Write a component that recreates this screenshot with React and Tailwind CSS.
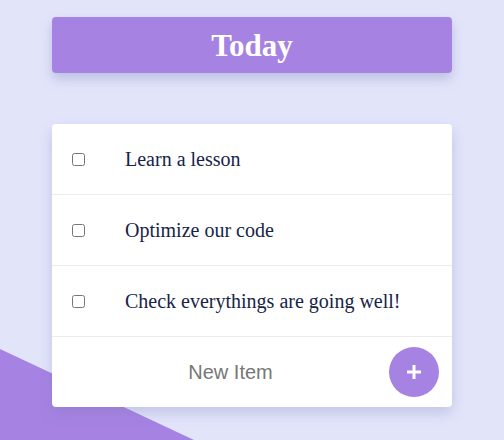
import React from "react";

const items = ["Learn a lesson", "Optimize our code", "Check everythings are going well!"];

export default function App() {
  return (
    <div className="relative h-[440px] w-full overflow-hidden bg-[#e2e5fa]">
      <svg className="absolute left-0 bottom-0" width="200" height="95" viewBox="0 0 200 95">
        <polygon points="0,4 194,95 0,95" fill="#a683e3" />
      </svg>
      <div className="relative flex flex-col items-center pt-[17px]">
        <div className="flex h-[56px] w-[400px] items-center justify-center rounded-[4px] bg-[#a683e3] pt-[3px] shadow-[0_6px_12px_rgba(120,120,180,0.35)]">
          <h1 className="text-[31px] font-bold text-white" style={{ fontFamily: '"Liberation Serif", serif' }}>
            Today
          </h1>
        </div>
        <div className="mt-[51px] w-[400px] rounded-[4px] bg-white shadow-[0_6px_14px_rgba(120,120,180,0.3)]">
          {items.map((t) => (
            <div key={t} className="flex h-[71px] items-center border-b border-[#ececf0]">
              <input type="checkbox" className="ml-[20px] h-[13px] w-[13px]" />
              <span
                className="ml-[40px] text-[20px] text-[#172448]"
                style={{ fontFamily: '"Liberation Serif", serif' }}
              >
                {t}
              </span>
            </div>
          ))}
          <div className="flex h-[70px] items-center pl-[20px] pr-[13px]">
            <input
              type="text"
              placeholder="New Item"
              className="min-w-0 flex-1 bg-transparent text-center text-[20px] text-[#777] placeholder:text-[#777] outline-none"
              style={{ fontFamily: '"Liberation Sans", Arial, sans-serif' }}
            />
            <button className="flex h-[50px] w-[50px] items-center justify-center rounded-full bg-[#a683e3]">
              <svg width="14" height="14" viewBox="0 0 14 14">
                <rect x="5.5" y="0" width="3" height="14" fill="white" />
                <rect x="0" y="5.5" width="14" height="3" fill="white" />
              </svg>
            </button>
          </div>
        </div>
      </div>
    </div>
  );
}
